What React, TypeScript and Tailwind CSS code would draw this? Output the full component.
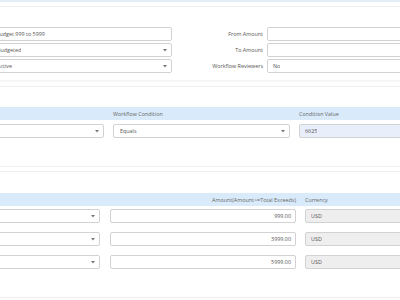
import React from "react";

const Arrow = () => (
  <svg width="4" height="3" viewBox="0 0 4 3" className="shrink-0">
    <path d="M0 0 L4 0 L2 2.5 Z" fill="#777" />
  </svg>
);

const Select = ({ text, cls }: { text?: string; cls: string }) => (
  <div className={`flex items-center justify-between h-[14px] border border-[#d2d2d2] rounded-[2px] bg-white pl-[6px] pr-[4px] ${cls}`}>
    <span className="truncate">{text ?? ""}</span>
    <Arrow />
  </div>
);

const Input = ({ text, cls }: { text?: string; cls: string }) => (
  <div className={`flex items-center h-[14px] border border-[#d2d2d2] rounded-[2px] px-[5px] ${cls}`}>
    <span className="truncate">{text ?? ""}</span>
  </div>
);

export default function App() {
  return (
    <div
      className="w-[400px] h-[300px] overflow-hidden bg-white text-[5.4px] leading-[8px] text-[#555]"
      style={{ fontFamily: '"Open Sans", "Noto Sans", sans-serif' }}
    >
      <div className="h-[2px] bg-[#e4eef7]" />
      <div className="h-[4px]" />
      <div className="border-t border-[#eeeeee]" />

      <div className="flex pt-[20px]">
        <div className="ml-[-10px] w-[182px] shrink-0 flex flex-col gap-[2px]">
          <Input text="Budget 999 to 5999" cls="bg-white" />
          <Select text="Budgeted" cls="" />
          <Select text="Active" cls="" />
        </div>
        <div className="w-[91px] shrink-0 flex flex-col gap-[2px] items-end text-[#555]">
          <div className="h-[14px] flex items-center">From Amount</div>
          <div className="h-[14px] flex items-center">To Amount</div>
          <div className="h-[14px] flex items-center">Workflow Reviewers</div>
        </div>
        <div className="ml-[4px] w-[160px] shrink-0 flex flex-col gap-[2px]">
          <Input cls="bg-white" />
          <Input cls="bg-white" />
          <Input text="No" cls="bg-white" />
        </div>
      </div>

      <div className="mt-[7px] h-[2px] bg-[#f6f6f6]" />
      <div className="mt-[4px] border-t border-[#eeeeee]" />

      <div className="mt-[20px] h-[13px] bg-[#d9ebfb] flex items-center text-[#666]">
        <div className="w-[113px] shrink-0" />
        <div className="w-[186px] shrink-0">Workflow Condition</div>
        <div>Condition Value</div>
      </div>
      <div className="mt-[4px] flex">
        <Select cls="ml-[-6px] w-[110px] shrink-0" />
        <Select text="Equals" cls="ml-[9px] w-[177px] shrink-0" />
        <Input text="6625" cls="ml-[9px] w-[140px] shrink-0 bg-[#e8eefa]" />
      </div>

      <div className="mt-[28px] border-t border-[#f3f3f3]" />
      <div className="mt-[4px] border-t border-[#eeeeee]" />

      <div className="mt-[21px] h-[13px] bg-[#d9ebfb] flex items-center text-[#666]">
        <div className="w-[110px] shrink-0" />
        <div className="w-[186px] shrink-0 text-right">Amount(Amount&gt;=Total Exceeds)</div>
        <div className="ml-[9px]">Currency</div>
      </div>
      <div className="mt-[3px] flex flex-col gap-[9px]">
        {["999.00", "3999.00", "5999.00"].map((v) => (
          <div key={v} className="flex">
            <Select cls="ml-[-6px] w-[106px] shrink-0" />
            <div className="ml-[10px] w-[186px] shrink-0 flex items-center justify-end h-[14px] border border-[#d2d2d2] rounded-[2px] bg-white pr-[4px]">
              {v}
            </div>
            <Input text="USD" cls="ml-[9px] w-[140px] shrink-0 bg-[#eeeeee]" />
          </div>
        ))}
      </div>
      <div className="mt-[28px] border-t border-[#eeeeee]" />
    </div>
  );
}
